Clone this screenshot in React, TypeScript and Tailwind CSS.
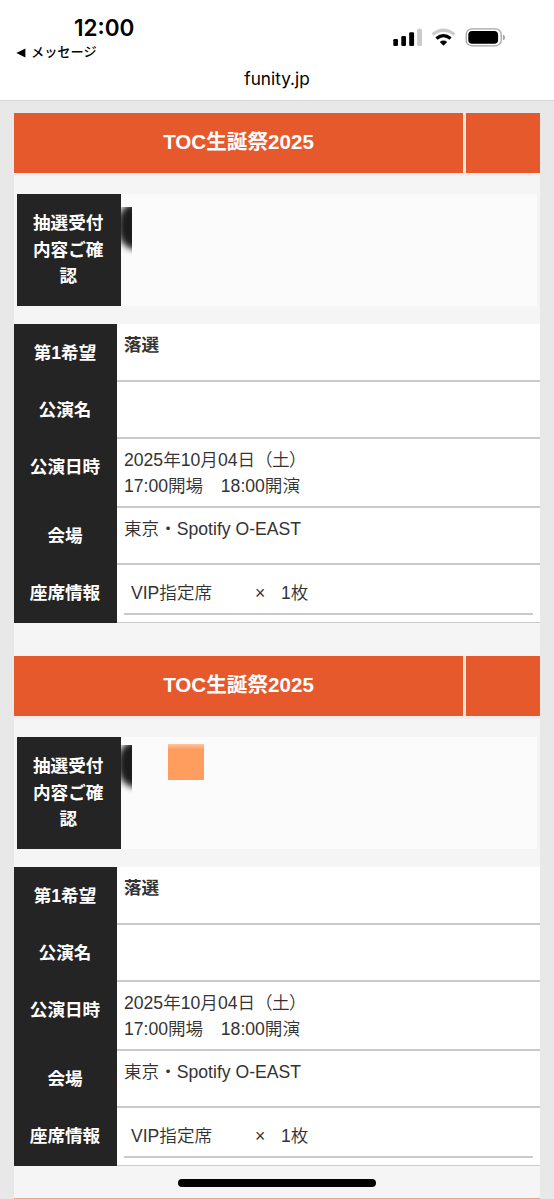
import type { ReactNode } from "react";

function StatusIcons() {
  return (
    <svg width="116" height="20" viewBox="0 0 116 20" className="block">
      <rect x="3.3" y="11" width="4.7" height="7" rx="1.2" />
      <rect x="11.3" y="8" width="4.7" height="10" rx="1.2" />
      <rect x="19.2" y="4.2" width="4.9" height="13.8" rx="1.2" />
      <rect x="27.1" y="0.8" width="4.9" height="17.2" rx="1.2" fill="#cbcbcb" />
      <g fill="none" strokeWidth="3.2">
        <path d="M42.6 6.4Q53.5 -2.2 64.4 6.4" stroke="#cbcbcb" />
        <path d="M46.4 10.6Q53.5 4.7 60.6 10.6" stroke="#000" />
      </g>
      <path d="M49.8 14Q53.5 11.2 57.2 14L53.5 17.8Z" />
      <rect x="76.2" y="0.8" width="35" height="17" rx="5.6" fill="none" stroke="#a3a3a3" strokeWidth="1.3" />
      <rect x="78.3" y="2.9" width="29.8" height="12.8" rx="3.8" />
      <path d="M112.9 6.5q2.2 1 2.2 2.9t-2.2 2.9z" fill="#a3a3a3" />
    </svg>
  );
}

function PhoneHeader() {
  return (
    <header className="h-[101px] border-b border-[#d5d8d8] bg-white text-black">
      <div className="flex h-[66px] justify-between">
        <div>
          <div className="pt-[14px] pl-[74px] font-['Inter'] text-[22.5px] leading-[28px] font-semibold">12:00</div>
          <div className="flex items-center gap-[5px] pt-[1px] pl-[16px] text-[13.2px] leading-[20px] font-medium">
            <svg width="10" height="10" viewBox="0 0 10 10"><path d="M0.4 5L9.4 0.6V9.4Z" /></svg>
            <span>メッセージ</span>
          </div>
        </div>
        <div className="pt-[28px] pr-[48px]"><StatusIcons /></div>
      </div>
      <div className="text-center font-['Inter'] text-[17.2px] leading-[26px]">funity.jp</div>
    </header>
  );
}

function TitleBar({ children }: { children?: ReactNode }) {
  return (
    <div className="flex h-[60px] gap-[3px] bg-[#fbe4d8] text-[20.6px] font-bold text-white">
      <div className="flex w-[449px] items-center justify-center bg-[#e6592d] pb-px">{children}</div>
      <div className="flex-1 bg-[#e6592d]" />
    </div>
  );
}

function Row({ label, height, labelPad = "", last = false, children }: { label: string; height: string; labelPad?: string; last?: boolean; children?: ReactNode }) {
  return (
    <div className={`flex ${height}`}>
      <div className={`flex w-[103px] items-center justify-center bg-[#242424] pr-px font-bold text-white ${labelPad}`}>{label}</div>
      <div className={`flex-1 border-[#cacaca] bg-white px-[7px] pt-[8px] ${last ? "border-b" : "border-b-2"}`}>{children}</div>
    </div>
  );
}

function Entry({ marked = false }: { marked?: boolean }) {
  return (
    <section className="h-[543px]">
      <TitleBar>TOC生誕祭2025</TitleBar>
      <div className="h-[3px] bg-[#efeded]" />
      <div className="mx-[3px] mt-[18px] flex h-[112px] bg-[#fbfbfb]">
        <div className="flex w-[103.5px] items-center bg-[#242424] pl-[16px] text-center font-bold text-white">
          抽選受付<br />内容ご確<br />認
        </div>
        <div className="relative flex-1">
          <div className={`absolute left-0 h-[54px] w-[11.5px] overflow-hidden ${marked ? "top-[8px]" : "top-[13px]"}`}>
            <div className="absolute top-[-5px] -left-[3px] h-[48px] w-[40px] rounded-[20px] bg-[#1c1c1c] blur-[3px]" />
          </div>
          {marked && <div className="absolute top-[7px] left-[47px] h-[36px] w-[36px] bg-linear-to-b from-[#ffc59e] via-[#ff9d5e] via-15% to-[#ff9d5e]" />}
        </div>
      </div>
      <div className="mt-[18px] font-[350] text-[#333]">
        <Row label="第1希望" height="h-[58px]"><strong className="font-bold">落選</strong></Row>
        <Row label="公演名" height="h-[57px]" />
        <Row label="公演日時" height="h-[69px]" labelPad="pb-[12px]">
          <p className="leading-[26px]">2025年10月04日<span className="tracking-[-0.6px]">（土）</span><br />17:00開場　18:00開演</p>
        </Row>
        <Row label="会場" height="h-[57px]">東京・Spotify O-EAST</Row>
        <Row label="座席情報" height="h-[58px]" labelPad="pb-px" last>
          <div className="flex h-[42px] border-b-2 border-[#cacaca] pt-[7px] pl-[7px]">
            <span className="w-[124px]">VIP指定席</span>
            <span className="w-[26px]">×</span>
            <span>1枚</span>
          </div>
        </Row>
      </div>
    </section>
  );
}

export default function App() {
  return (
    <div className="relative h-[1199px] w-[554px] overflow-hidden bg-[#e8e8e8] font-['Liberation_Sans','Noto_Sans_CJK_JP',sans-serif] text-[17.6px] leading-[26.6px]">
      <PhoneHeader />
      <main className="mx-[14px] mt-[12px] bg-[#f5f5f5]">
        <Entry />
        <Entry marked />
        <div className="-mt-px border-t border-[#dda794]"><TitleBar /></div>
      </main>
      <div className="absolute bottom-[12px] left-[178px] h-[8px] w-[198px] rounded-full bg-black" />
    </div>
  );
}
